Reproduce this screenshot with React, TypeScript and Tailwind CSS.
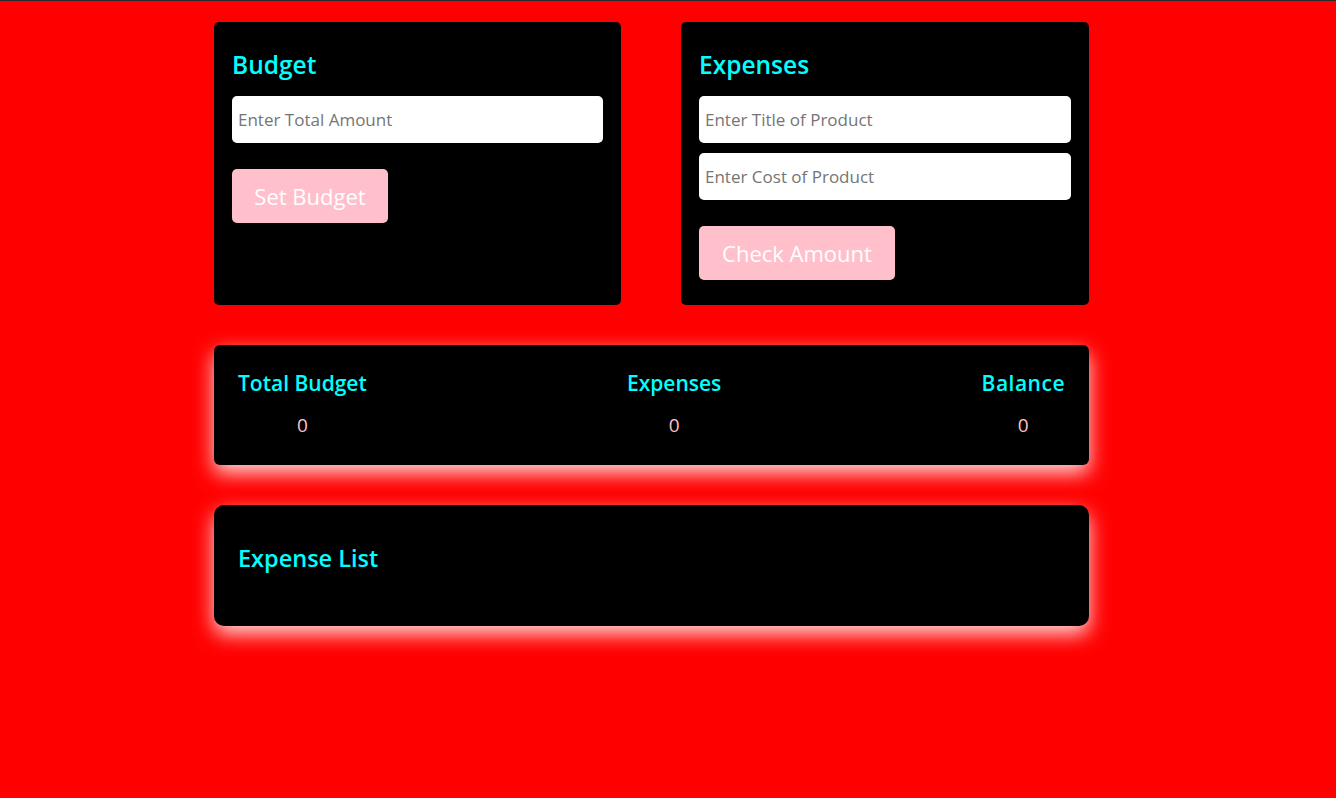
import React from "react";

const font = { fontFamily: '"Open Sans", "Noto Sans", sans-serif' };

export default function App() {
  return (
    <div
      className="min-h-[798px] w-full bg-[#ff0000] border-t border-[#2b2b2b] text-white"
      style={font}
    >
      <div className="ml-[214px] w-[875px] pt-[21px]">
        <div className="flex gap-[60px]">
          <div className="w-[407px] h-[283px] bg-black rounded-[5px] px-[18px] pt-[25px]">
            <h2 className="text-[24.5px] leading-[35px] font-semibold text-[#00ffff]">Budget</h2>
            <input
              className="mt-[14px] w-full h-[47px] bg-white rounded-[5px] px-[6px] text-[17px] text-black placeholder:text-[#757575] outline-none"
              placeholder="Enter Total Amount"
            />
            <button className="mt-[26px] w-[156px] h-[54px] bg-[#ffc0cb] rounded-[5px] text-[22px] text-white">
              Set Budget
            </button>
          </div>
          <div className="w-[408px] h-[283px] bg-black rounded-[5px] px-[18px] pt-[25px]">
            <h2 className="text-[24.5px] leading-[35px] font-semibold text-[#00ffff]">Expenses</h2>
            <input
              className="mt-[14px] w-full h-[47px] bg-white rounded-[5px] px-[6px] text-[17px] text-black placeholder:text-[#757575] outline-none"
              placeholder="Enter Title of Product"
            />
            <input
              className="mt-[10px] w-full h-[47px] bg-white rounded-[5px] px-[6px] text-[17px] text-black placeholder:text-[#757575] outline-none"
              placeholder="Enter Cost of Product"
            />
            <button className="mt-[26px] w-[196px] h-[54px] bg-[#ffc0cb] rounded-[5px] text-[22px] text-white">
              Check Amount
            </button>
          </div>
        </div>

        <div className="mt-[40px] h-[120px] bg-black rounded-[6px] px-[24px] pt-[24px] shadow-[0_8px_20px_rgba(255,255,255,0.85)] flex justify-between">
          <div className="flex flex-col items-center">
            <div className="text-[21px] leading-[29px] font-semibold text-[#00ffff]">Total Budget</div>
            <div className="mt-[13px] text-[19px] text-[#ffc0cb]">0</div>
          </div>
          <div className="flex flex-col items-center">
            <div className="text-[21px] leading-[29px] font-semibold text-[#00ffff]">Expenses</div>
            <div className="mt-[13px] text-[19px] text-[#ffc0cb]">0</div>
          </div>
          <div className="flex flex-col items-center">
            <div className="text-[21px] leading-[29px] font-semibold text-[#00ffff] tracking-[0.5px]">Balance</div>
            <div className="mt-[13px] text-[19px] text-[#ffc0cb]">0</div>
          </div>
        </div>

        <div className="mt-[40px] h-[121px] bg-black rounded-[10px] px-[24px] pt-[37px] shadow-[0_8px_20px_rgba(255,255,255,0.85)]">
          <h2 className="text-[23.5px] leading-[33px] font-semibold text-[#00ffff]">Expense List</h2>
        </div>
      </div>
    </div>
  );
}
